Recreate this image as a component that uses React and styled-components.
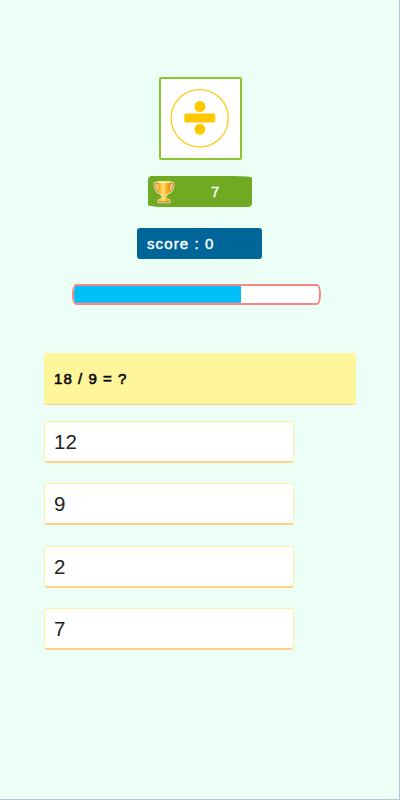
import React from "react";
import styled, { createGlobalStyle } from "styled-components";

const GlobalStyle = createGlobalStyle`
  * { box-sizing: border-box; }
  body { margin: 0; background: #ecfff7; }
`;

const Screen = styled.main`
  width: 400px;
  height: 800px;
  padding-top: 77px;
  display: flex;
  flex-direction: column;
  align-items: center;
  background: #ecfff7;
  border-right: 1px solid #b5c8d2;
  border-bottom: 1px solid #b5c8d2;
  font-family: "Liberation Sans", Arial, sans-serif;
  overflow: hidden;
`;

const OperationCard = styled.div`
  width: 83px;
  height: 83px;
  flex: none;
  margin-left: 1px;
  padding-bottom: 1px;
  display: grid;
  place-items: center;
  background: #fff;
  border: 2px solid #8bc631;
  border-radius: 2px;
`;

const Badge = styled.div`
  display: flex;
  align-items: center;
  flex: none;
  color: #fff;
  font-size: 15px;
  font-weight: 400;
  -webkit-text-stroke: 0.4px #fff;
  line-height: 30px;
`;

const LevelBadge = styled(Badge)`
  width: 104px;
  height: 31px;
  margin: 16px 0 0 1px;
  padding-left: 4px;
  background: #70a922;
  border-radius: 4px 20px 4px 20px / 4px 2px 4px 2px;
`;

const LevelValue = styled.span`
  margin-left: 35px;
`;

const ScoreBadge = styled(Badge)`
  width: 125px;
  height: 31px;
  margin: 21px 0 0;
  padding-left: 10px;
  background: #006699;
  border-radius: 3px;
  letter-spacing: 1.1px;
`;

const Timer = styled.div`
  width: 249px;
  height: 21px;
  flex: none;
  margin: 25px 6px 0 0;
  background: #fff;
  border: 2px solid #fb8484;
  border-radius: 4px / 10px;
  overflow: hidden;
`;

const TimerFill = styled.div`
  height: 17px;
  background: #00bff6;
  border-bottom: 1px solid #55b2dc;
`;

const Quiz = styled.section`
  width: 312px;
  margin: 48px 0 0 1px;
  display: flex;
  flex-direction: column;
`;

const Question = styled.h1`
  margin: 0 0 16px;
  height: 52px;
  padding-left: 10px;
  background: #fff59b;
  border-bottom: 1px solid #ffd083;
  border-radius: 3px;
  font-size: 15px;
  font-weight: 400;
  -webkit-text-stroke: 0.6px #080808;
  line-height: 52px;
  letter-spacing: 1.05px;
  color: #080808;
`;

const Options = styled.div`
  display: flex;
  flex-direction: column;
  gap: 20.4px;
`;

const Option = styled.button`
  width: 250px;
  height: 42px;
  padding: 0 0 0 9px;
  text-align: left;
  background: #fff;
  border: 1px solid #fff0a8;
  border-bottom: 2px solid #ffd083;
  border-radius: 4px;
  font: 20.5px/39px "Liberation Sans", Arial, sans-serif;
  color: #222;
`;

const DivideIcon = () => (
  <svg width="60" height="60" viewBox="0 0 60 60">
    <circle cx="29.7" cy="30.2" r="28.6" fill="none" stroke="#ffcb12" strokeWidth="1.3" />
    <circle cx="29.9" cy="18.5" r="5.5" fill="#ffc800" />
    <rect x="14.3" y="25.5" width="31" height="9" rx="2" fill="#ffc800" />
    <circle cx="29.9" cy="41.3" r="5.5" fill="#ffc800" />
  </svg>
);

const TrophyIcon = () => (
  <svg width="24" height="24" viewBox="0 0 24 24">
    <defs>
      <linearGradient id="gold">
        <stop offset="0" stopColor="#ee9b16" />
        <stop offset=".28" stopColor="#ffc83d" />
        <stop offset=".45" stopColor="#ffe27a" />
        <stop offset=".65" stopColor="#fbb928" />
        <stop offset="1" stopColor="#e98a0c" />
      </linearGradient>
    </defs>
    <path
      d="M5.5 1.8h13v1.1h3c.2 5-1.5 9.3-5.3 10.5l-2.7 2.6v2.5l4 1.5v2.3h-11V20l4-1.5V16l-2.7-2.6C4 12.2 2.3 7.9 2.5 2.9h3z"
      fill="#eadfaf" stroke="#eadfaf" strokeWidth="1.8" strokeLinejoin="round"
    />
    <path d="M6 3.6H2.8C3 8.2 4.8 11.5 8.3 12.5M18 3.6h3.2c-.2 4.6-2 7.9-5.5 8.9" fill="none" stroke="#d99527" strokeWidth="1.2" />
    <path d="M5.3 2h13.4c0 7-1.4 11.2-5.2 13.3V18.3l4 1.5V22h-11v-2.2l4-1.5v-3C6.7 13.2 5.3 9 5.3 2z" fill="url(#gold)" />
    <path d="M6.2 2.3h11.6" stroke="#fff0b1" strokeWidth="1" />
    <path d="M7 21.9h10" stroke="#b36e16" strokeWidth=".8" />
  </svg>
);

const answers = [12, 9, 2, 7];
const remaining = 68.1;

export default function App() {
  return (
    <>
      <GlobalStyle />
      <Screen>
        <OperationCard><DivideIcon /></OperationCard>
        <LevelBadge><TrophyIcon /><LevelValue>7</LevelValue></LevelBadge>
        <ScoreBadge>score : 0</ScoreBadge>
        <Timer><TimerFill style={{ width: `${remaining}%` }} /></Timer>
        <Quiz>
          <Question>18 / 9 = ?</Question>
          <Options>
            {answers.map((answer) => <Option key={answer}>{answer}</Option>)}
          </Options>
        </Quiz>
      </Screen>
    </>
  );
}
